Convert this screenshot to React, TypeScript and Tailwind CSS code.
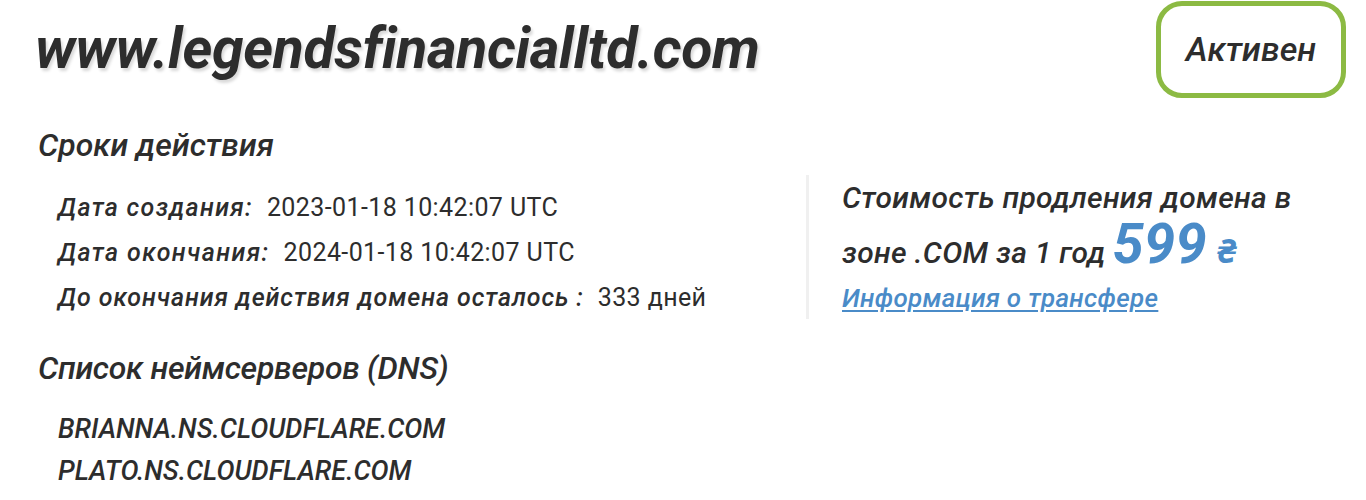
export default function App() {
  const font = { fontFamily: 'Roboto, "Noto Sans", sans-serif' };
  return (
    <div className="w-[1366px] h-[500px] bg-white text-[#2d2d2d] italic overflow-hidden" style={font}>
      <div className="flex justify-between items-start pl-[35px] pr-[20px]">
        <h1 className="mt-[17px] text-[57px] leading-[64px] font-bold tracking-[-0.3px] [text-shadow:2px_3px_3px_rgba(0,0,0,0.15)]">
          www.legendsfinancialltd.com
        </h1>
        <div className="mt-[1px] w-[190px] h-[97px] rounded-[26px] border-[5px] border-[#8cba43] flex items-center justify-center">
          <span className="text-[34px] font-medium">Активен</span>
        </div>
      </div>

      <div className="flex pl-[38px]">
        <div className="w-[768px]">
          <h2 className="mt-[27px] text-[32px] leading-[40px] font-medium">Сроки действия</h2>
          <div className="mt-[20px] pl-[20px] flex flex-col text-[25px] leading-[45px]">
            <div>
              <span className="font-medium tracking-[1.3px]">Дата создания:</span>
              <span className="not-italic ml-[14px] tracking-[0.4px]">2023-01-18 10:42:07 UTC</span>
            </div>
            <div>
              <span className="font-medium tracking-[1.4px]">Дата окончания:</span>
              <span className="not-italic ml-[14px] tracking-[0.4px]">2024-01-18 10:42:07 UTC</span>
            </div>
            <div>
              <span className="font-medium tracking-[0.9px]">До окончания действия домена осталось :</span>
              <span className="not-italic ml-[14px] tracking-[0.4px]">333 дней</span>
            </div>
          </div>
        </div>
        <div className="mt-[77px] h-[144px] w-[3px] bg-[#f0f0f0]" />
        <div className="pl-[33px] mt-[74px]">
          <p className="text-[30px] leading-[52px] font-medium tracking-[0.3px]">Стоимость продления домена в</p>
          <p className="text-[30px] leading-[58px] font-medium tracking-[0.3px]">
            зоне .COM за 1 год
            <span className="ml-[7px] text-[56px] leading-[0px] font-bold text-[#4a8bc8]">599</span>
            <span className="ml-[10px] text-[34px] leading-[0px] font-bold text-[#4a8bc8]">₴</span>
          </p>
          <a className="block text-[26px] leading-[32px] font-medium tracking-[0.3px] text-[#4a8bc8] underline underline-offset-[3px]" href="#">
            Информация о трансфере
          </a>
        </div>
      </div>

      <h2 className="pl-[38px] mt-[28px] text-[32px] leading-[40px] font-medium tracking-[-0.3px]">Список неймсерверов (DNS)</h2>
      <div className="pl-[58px] mt-[20px] flex flex-col text-[27px] leading-[42px] font-medium">
        <div>BRIANNA.NS.CLOUDFLARE.COM</div>
        <div>PLATO.NS.CLOUDFLARE.COM</div>
      </div>
    </div>
  );
}
